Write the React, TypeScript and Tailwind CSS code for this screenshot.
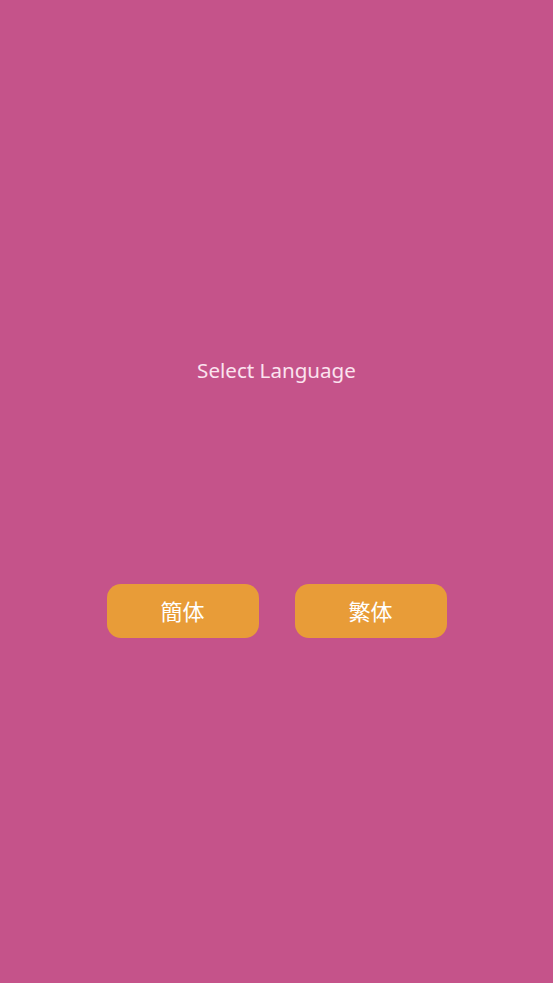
const buttons = ['簡体', '繁体']

export default function App() {
  return (
    <div
      className="flex h-[983px] w-full flex-col items-center bg-[#c5538a] pt-[356px]"
      style={{ fontFamily: '"Noto Sans", "Noto Sans CJK JP", sans-serif' }}
    >
      <h1 className="text-[20.6px] leading-[28px] text-[#fbe3ef]">Select Language</h1>
      <div className="mt-[200px] flex gap-[36px]">
        {buttons.map((label) => (
          <button
            key={label}
            className="flex h-[54px] w-[152px] items-center justify-center rounded-[14px] bg-[#e89c38] text-[22px] text-white"
          >
            {label}
          </button>
        ))}
      </div>
    </div>
  )
}
